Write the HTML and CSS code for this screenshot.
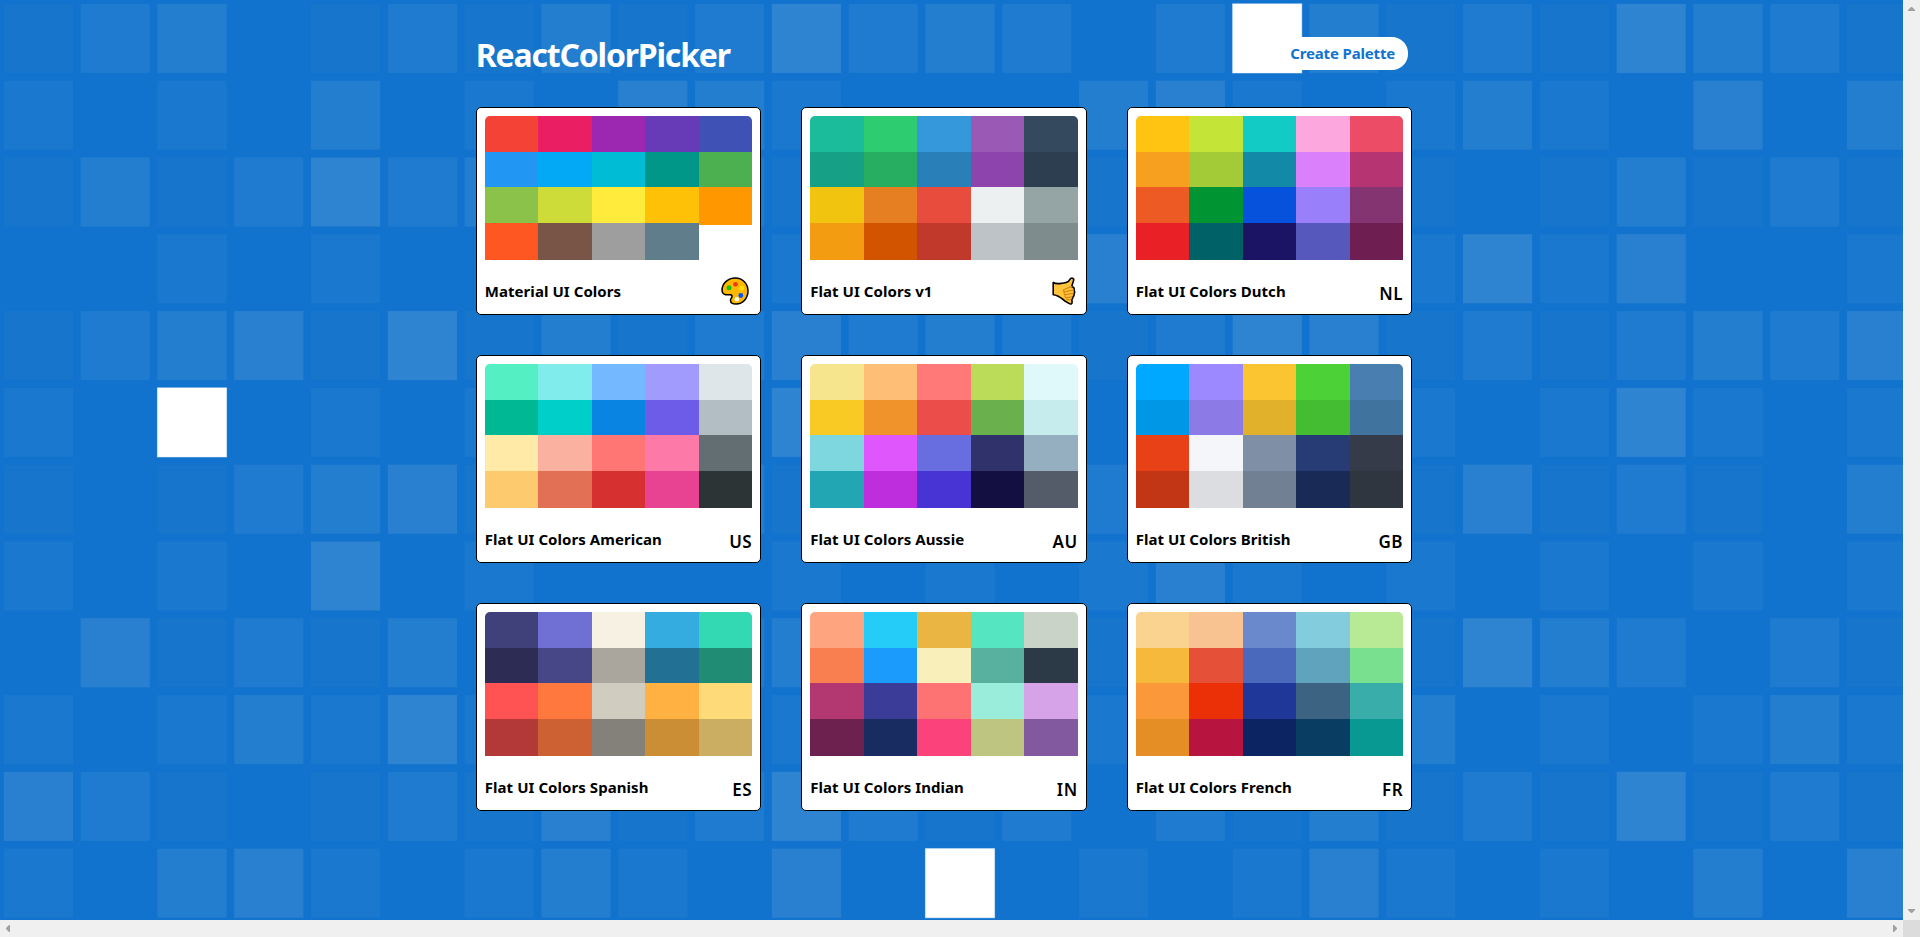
FILE: index.html
```html
<!DOCTYPE html>
<html lang="en">
<head>
<meta charset="utf-8">
<title>ReactColorPicker</title>
<link rel="stylesheet" href="styles.css">
</head>
<body>
<div class="window">
  <div class="viewport">
    <svg class="backdrop" id="backdrop" viewBox="0 0 2477.86 1197.92" aria-hidden="true"></svg>
    <main class="page">
      <header class="header">
        <h1 class="brand">ReactColorPicker</h1>
        <a class="create">Create Palette</a>
      </header>
      <section class="palettes">
        <article class="card">
          <div class="swatches" data-colors="F44336 E91E63 9C27B0 673AB7 3F51B5 2196F3 03A9F4 00BCD4 009688 4CAF50 8BC34A CDDC39 FFEB3B FFC107 FF9800 FF5722 795548 9E9E9E 607D8B"></div>
          <h2 class="title"><span class="name">Material UI Colors</span>
            <svg class="emoji palette-icon" viewBox="0 0 28 28"><path d="M14.3 1C21.5 1 27 6.6 27 14c0 7.200-5.200 13-11.800 13-3 0-5.700-1-5.700-3.600 0-2 1.500-2.400 1.500-4.200 0-1.200-1-1.500-2.300-1.400C3.800 18.200 1 17 1 13.300 1 6.500 6.800 1 14.300 1z" fill="#ffb700" stroke="#000" stroke-width="1.500"/><circle cx="8" cy="10.700" r="2.500" fill="#14c414"/><circle cx="14.500" cy="7.300" r="2.400" fill="#f03a17"/><circle cx="20.700" cy="11.200" r="2.400" fill="#ffe000"/><circle cx="19.800" cy="18.500" r="2.400" fill="#0052ff"/><circle cx="15.800" cy="22.200" r="2.200" fill="#fff"/></svg>
          </h2>
        </article>
        <article class="card">
          <div class="swatches" data-colors="1ABC9C 2ECC71 3498DB 9B59B6 34495E 16A085 27AE60 2980B9 8E44AD 2C3E50 F1C40F E67E22 E74C3C ECF0F1 95A5A6 F39C12 D35400 C0392B BDC3C7 7F8C8D"></div>
          <h2 class="title"><span class="name">Flat UI Colors v1</span>
            <svg class="emoji hand-icon" viewBox="0 0 24 28"><path d="M1.200 5.500C3.500 7 6 6.800 9 6.400c3-.3 5.500-.2 7.500-2L18 2.200c1.200-2 4.300-1.200 3.600 1.200l-1.900 6.200c1.900.2 2.900 1.600 2.300 3.500.8 1.300.8 2.700 0 3.800.3 1.400-.2 2.500-1.200 3 .2 1.300-.2 2.200-1 2.700l.3 2.700c.1 1.700-1.600 2.100-2.700 1.400l-4.900-3C9.500 21.500 6.500 18 1.200 17.700z" fill="#ffc43b" stroke="#000" stroke-width="1.600" stroke-linejoin="round"/><path d="M19.700 9.600l-4.500 1.700c-1.500.9-3.800.7-3.800 2.200 0 1.300 2 1.400 3.200.9l6.900-1.600M13 14.800c-1.500 1-1.200 3 .6 2.800l7.500-1.200M13.500 17.800c-1.100 1.200-.4 2.900 1.100 2.800l5.500-.8M15 20.800c-.8 1.300.3 2.100 1.300 1.900l2.600-.2" fill="none" stroke="#d9890f" stroke-width="1.200" stroke-linecap="round"/></svg>
          </h2>
        </article>
        <article class="card">
          <div class="swatches" data-colors="FFC312 C4E538 12CBC4 FDA7DF ED4C67 F79F1F A3CB38 1289A7 D980FA B53471 EE5A24 009432 0652DD 9980FA 833471 EA2027 006266 1B1464 5758BB 6F1E51"></div>
          <h2 class="title"><span class="name">Flat UI Colors Dutch</span><span class="code">NL</span></h2>
        </article>
        <article class="card">
          <div class="swatches" data-colors="55EFC4 81ECEC 74B9FF A29BFE DFE6E9 00B894 00CEC9 0984E3 6C5CE7 B2BEC3 FFEAA7 FAB1A0 FF7675 FD79A8 636E72 FDCB6E E17055 D63031 E84393 2D3436"></div>
          <h2 class="title"><span class="name">Flat UI Colors American</span><span class="code">US</span></h2>
        </article>
        <article class="card">
          <div class="swatches" data-colors="F6E58D FFBE76 FF7979 BADC58 DFF9FB F9CA24 F0932B EB4D4B 6AB04C C7ECEE 7ED6DF E056FD 686DE0 30336B 95AFC0 22A6B3 BE2EDD 4834D4 130F40 535C68"></div>
          <h2 class="title"><span class="name">Flat UI Colors Aussie</span><span class="code">AU</span></h2>
        </article>
        <article class="card">
          <div class="swatches" data-colors="00A8FF 9C88FF FBC531 4CD137 487EB0 0097E6 8C7AE6 E1B12C 44BD32 40739E E84118 F5F6FA 7F8FA6 273C75 353B48 C23616 DCDDE1 718093 192A56 2F3640"></div>
          <h2 class="title"><span class="name">Flat UI Colors British</span><span class="code">GB</span></h2>
        </article>
        <article class="card">
          <div class="swatches" data-colors="40407A 706FD3 F7F1E3 34ACE0 33D9B2 2C2C54 474787 AAA69D 227093 218C74 FF5252 FF793F D1CCC0 FFB142 FFDA79 B33939 CD6133 84817A CC8E35 CCAE62"></div>
          <h2 class="title"><span class="name">Flat UI Colors Spanish</span><span class="code">ES</span></h2>
        </article>
        <article class="card">
          <div class="swatches" data-colors="FEA47F 25CCF7 EAB543 55E6C1 CAD3C8 F97F51 1B9CFC F8EFBA 58B19F 2C3A47 B33771 3B3B98 FD7272 9AECDB D6A2E8 6D214F 182C61 FC427B BDC581 82589F"></div>
          <h2 class="title"><span class="name">Flat UI Colors Indian</span><span class="code">IN</span></h2>
        </article>
        <article class="card">
          <div class="swatches" data-colors="FAD390 F8C291 6A89CC 82CCDD B8E994 F6B93B E55039 4A69BD 60A3BC 78E08F FA983A EB2F06 1E3799 3C6382 38ADA9 E58E26 B71540 0C2461 0A3D62 079992"></div>
          <h2 class="title"><span class="name">Flat UI Colors French</span><span class="code">FR</span></h2>
        </article>
      </section>
    </main>
  </div>
  <div class="bar bar-v">
    <svg width="7" height="4" viewBox="0 0 7 4"><path d="M0 4V3L3 0H4L7 3V4z"/></svg>
    <svg width="7" height="4" viewBox="0 0 7 4"><path d="M0 0V1L3 4H4L7 1V0z"/></svg>
  </div>
  <div class="bar bar-h">
    <svg width="4" height="7" viewBox="0 0 4 7"><path d="M4 0H3L0 3V4L3 7H4z"/></svg>
    <svg width="4" height="7" viewBox="0 0 4 7"><path d="M0 0H1L4 3V4L1 7H0z"/></svg>
  </div>
  <div class="corner"></div>
</div>
<script src="app.js"></script>
</body>
</html>
```
FILE: styles.css
```css
* { box-sizing: border-box; }
body {
  margin: 0;
  overflow: hidden;
  font-family: "Noto Sans", "Open Sans", sans-serif;
}
.window {
  display: grid;
  grid-template: 920px 17px / 1903px 17px;
}
.viewport {
  position: relative;
  overflow: hidden;
  background: #1173cd;
}
.backdrop {
  position: absolute;
  top: 0;
  left: 0;
  width: 1903px;
  height: 920px;
}
.backdrop .l1 { fill: #1776cc; }
.backdrop .l2 { fill: #1b78cf; }
.backdrop .l3 { fill: #1f7bcf; }
.backdrop .l4 { fill: #237ecf; }
.backdrop .l5 { fill: #2a80d0; }
.backdrop .l6 { fill: #2e84d1; }
.backdrop .l7 { fill: #fff; stroke: #fff; stroke-opacity: 0.5; stroke-width: 1.3; }
.page {
  position: relative;
  width: 936.4px;
  margin-left: 475.75px;
}
.header {
  display: flex;
  justify-content: space-between;
  height: 107px;
  padding: 33px 4px 0 0;
}
.brand {
  margin: 0;
  color: #fff;
  font-size: 32px;
  line-height: 44px;
  font-weight: 700;
  letter-spacing: -1.2px;
}
.create {
  height: 33px;
  margin-top: 4px;
  padding: 0 13px;
  border-radius: 16px;
  background: #fff;
  color: #1173cd;
  font-size: 15px;
  line-height: 32px;
  font-weight: 700;
  letter-spacing: -0.15px;
}
.palettes {
  display: grid;
  grid-template-columns: repeat(3, 285.45px);
  gap: 40px;
}
.card {
  height: 208px;
  padding: 8px;
  border: 1px solid #000;
  border-radius: 5px;
  background: #fff;
}
.swatches {
  display: grid;
  grid-template-columns: repeat(5, 1fr);
  grid-auto-rows: 35.67px;
  height: 144px;
  overflow: hidden;
  border-radius: 5px 5px 0 0;
}
.swatch { height: 37.5px; }
.title {
  display: flex;
  justify-content: space-between;
  margin: 0;
  padding-top: 15px;
  font-size: 15px;
  line-height: 32px;
  font-weight: 700;
}
.name {
  white-space: nowrap;
  letter-spacing: 0.06px;
}
.code {
  font-size: 17px;
  font-weight: 600;
  line-height: 37px;
  letter-spacing: 0.5px;
}
.emoji { margin-top: 2px; height: 28px; }
.palette-icon { width: 28px; margin-right: 3px; }
.hand-icon { width: 24px; margin-right: 2px; }
.bar {
  display: flex;
  justify-content: space-between;
  align-items: center;
  background: #f0f0f0;
}
.bar path { fill: #a0a0a0; }
.bar-v { flex-direction: column; padding: 7px 0; }
.bar-h { padding: 0 6px; }
.bar svg { display: block; }
.corner { background: #dcdcdc; }
```
FILE: app.js
```js
// Brightness level of each background tile, one string per row.
const rows = [
  "1340131413634303741316431",
  "2020402054200045202420504",
  "1413634003100010001014131",
  "0020200000200050002625002",
  "1345161413534313651313435",
  "2070202000600000002026202",
  "1013451004100030001513104",
  "2020602000202025202020202",
  "0513140003400010001643031",
  "2024262000200020004020242",
  "5310131513631303141316131",
  "2045202420507020252020405"
];
const backdrop = document.getElementById("backdrop");
rows.forEach((row, y) => [...row].forEach((level, x) => {
  if (level === "0") return;
  const tile = document.createElementNS("http://www.w3.org/2000/svg", "rect");
  tile.setAttribute("x", x * 100 + 5);
  tile.setAttribute("y", y * 100 + 5);
  tile.setAttribute("width", 90);
  tile.setAttribute("height", 90);
  tile.setAttribute("class", "l" + level);
  backdrop.append(tile);
}));

document.querySelectorAll(".swatches").forEach(box => {
  box.dataset.colors.split(" ").forEach(color => {
    const swatch = document.createElement("div");
    swatch.className = "swatch";
    swatch.style.background = "#" + color;
    box.append(swatch);
  });
});
```
